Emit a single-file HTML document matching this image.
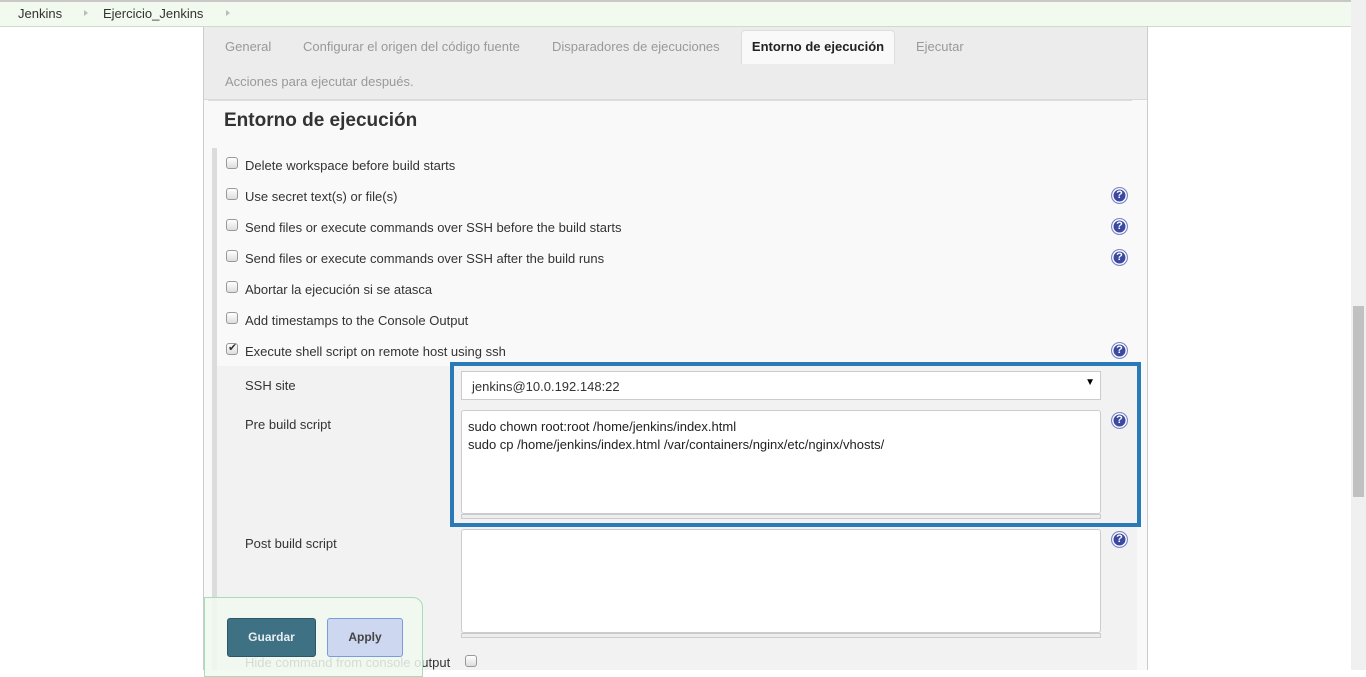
<!DOCTYPE html>
<html><head><meta charset="utf-8"><style>
*{box-sizing:border-box;margin:0;padding:0}
body{width:1366px;height:670px;overflow:hidden;background:#fff;font-family:"Liberation Sans",sans-serif;font-size:13px;color:#333;position:relative}
.a{position:absolute}
.bc{left:0;top:0;width:1351px;height:27px;background:#f2f9ef;border-top:2px solid #c8c8c8;border-bottom:1px solid #cfdccb}
.bc span{position:absolute;top:4px;font-size:13px;color:#333}
.tri{position:absolute;top:8px;width:0;height:0;border-left:4px solid #bbb;border-top:3.5px solid transparent;border-bottom:3.5px solid transparent}
.panel{left:203px;top:27px;width:945px;height:643px;background:#f9f9f9;border-left:1px solid #ccc;border-right:1px solid #ccc}
.tabs{left:204px;top:27px;width:943px;height:73px;background:#ececec;border-bottom:1px solid #d9d9d9}
.tab{position:absolute;color:#999;font-size:13px}
.act{left:741px;top:30px;width:154px;height:34px;background:#f9f9f9;border:1px solid #ddd;border-bottom:none;border-radius:4px 4px 0 0;font-weight:bold;color:#222;text-align:center;line-height:32px}
.cb{position:absolute;width:12px;height:12px;border:1px solid #999;border-radius:3px;background:linear-gradient(#fff,#ddd)}
.lbl{position:absolute;font-size:13px;color:#333}
.help{position:absolute;width:17px;height:17px;border-radius:50%;background:#3b4aa0;border:1px solid #7a86c8;box-shadow:inset 0 0 0 1.5px #fff, inset 0 0 0 3px #3b4aa0}
.help:after{content:"?";position:absolute;left:0;top:0;width:15px;text-align:center;color:#fff;font-weight:bold;font-size:11px;line-height:15px}
</style></head><body>
<div class="a bc"><span style="left:18px">Jenkins</span><div class="tri" style="left:84px"></div><span style="left:103px">Ejercicio_Jenkins</span><div class="tri" style="left:226px"></div></div>
<div class="a panel"></div>
<div class="a tabs"></div>
<div class="tab" style="left:225px;top:39px">General</div>
<div class="tab" style="left:303px;top:39px">Configurar el origen del código fuente</div>
<div class="tab" style="left:552px;top:39px">Disparadores de ejecuciones</div>
<div class="a act">Entorno de ejecución</div>
<div class="tab" style="left:916px;top:39px">Ejecutar</div>
<div class="tab" style="left:225px;top:74px">Acciones para ejecutar después.</div>
<div class="a" style="left:208px;top:100px;width:924px;height:1px;background:#ddd"></div>
<div class="a" style="left:224px;top:110px;font-size:19px;font-weight:bold;color:#333">Entorno de ejecución</div>
<div class="a" style="left:212px;top:148px;width:5px;height:522px;background:#dcdcdc"></div>
<div class="a" style="left:217px;top:366px;width:920px;height:304px;background:#f2f2f2"></div>

<div class="cb" style="left:226px;top:157px"></div><div class="lbl" style="left:245px;top:158px">Delete workspace before build starts</div>
<div class="cb" style="left:226px;top:188px"></div><div class="lbl" style="left:245px;top:189px">Use secret text(s) or file(s)</div><div class="help" style="left:1111px;top:187px"></div>
<div class="cb" style="left:226px;top:219px"></div><div class="lbl" style="left:245px;top:220px">Send files or execute commands over SSH before the build starts</div><div class="help" style="left:1111px;top:218px"></div>
<div class="cb" style="left:226px;top:250px"></div><div class="lbl" style="left:245px;top:251px">Send files or execute commands over SSH after the build runs</div><div class="help" style="left:1111px;top:249px"></div>
<div class="cb" style="left:226px;top:281px"></div><div class="lbl" style="left:245px;top:282px">Abortar la ejecución si se atasca</div>
<div class="cb" style="left:226px;top:312px"></div><div class="lbl" style="left:245px;top:313px">Add timestamps to the Console Output</div>
<div class="cb" style="left:226px;top:343px"><span style="position:absolute;left:1px;top:-3px;font-size:11px;color:#333">✔</span></div><div class="lbl" style="left:245px;top:344px">Execute shell script on remote host using ssh</div><div class="help" style="left:1111px;top:342px"></div>

<div class="lbl" style="left:245px;top:378px">SSH site</div>
<div class="lbl" style="left:245px;top:417px">Pre build script</div>
<div class="lbl" style="left:245px;top:536px">Post build script</div>

<div class="a" style="left:450px;top:362px;width:691px;height:165px;border:4px solid #2a7ab8"></div>
<div class="a" style="left:461px;top:371px;width:640px;height:29px;background:#fff;border:1px solid #ccc"><span style="position:absolute;left:10px;top:7px">jenkins@10.0.192.148:22</span><span style="position:absolute;right:5px;top:5px;font-size:10px;color:#000">▼</span></div>
<div class="a" style="left:461px;top:410px;width:640px;height:104px;background:#fff;border:1px solid #ccc;border-radius:3px;padding:7px 6px;line-height:18px;color:#222">sudo chown root:root /home/jenkins/index.html<br>sudo cp /home/jenkins/index.html /var/containers/nginx/etc/nginx/vhosts/</div>
<div class="a" style="left:461px;top:514px;width:640px;height:5px;background:#eee;border:1px solid #ccc"></div>
<div class="help" style="left:1111px;top:412px"></div>
<div class="a" style="left:461px;top:529px;width:640px;height:104px;background:#fff;border:1px solid #ccc;border-radius:3px"></div>
<div class="a" style="left:461px;top:633px;width:640px;height:5px;background:#eee;border:1px solid #ccc"></div>
<div class="help" style="left:1111px;top:531px"></div>
<div class="lbl" style="left:245px;top:655px">Hide command from console output</div>
<div class="cb" style="left:465px;top:655px"></div>

<div class="a" style="left:204px;top:597px;width:219px;height:80px;background:rgba(240,249,238,0.85);border:1px solid #a8dcb8;border-radius:0 10px 0 0"></div>
<div class="a" style="left:227px;top:618px;width:89px;height:39px;background:#3f7185;border:1px solid #2d5668;border-radius:3px;color:#e8eef0;font-weight:bold;font-size:12px;text-align:center;line-height:37px">Guardar</div>
<div class="a" style="left:327px;top:618px;width:76px;height:39px;background:#cdd8f0;border:1px solid #7b9ae0;border-radius:3px;color:#444;font-weight:bold;font-size:12px;text-align:center;line-height:37px">Apply</div>

<div class="a" style="left:1351px;top:0;width:15px;height:670px;background:#f0f0f0"></div>
<div class="a" style="left:1353px;top:306px;width:11px;height:191px;background:#c1c1c1"></div>
</body></html>
